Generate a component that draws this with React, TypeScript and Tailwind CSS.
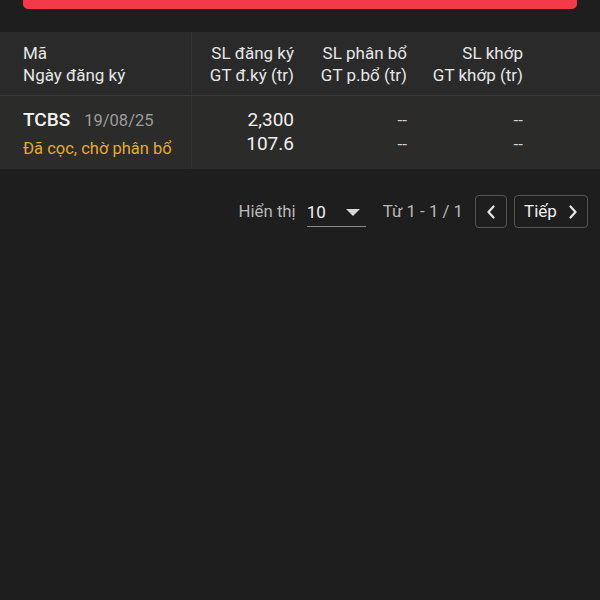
import React from "react";

export default function App() {
  return (
    <div
      className="w-[600px] h-[600px] bg-[#1e1e1e] text-[#e8e8e8] overflow-hidden"
      style={{ fontFamily: "Roboto, 'Noto Sans', sans-serif" }}
    >
      <div className="px-[23px]">
        <div className="h-[9px] bg-[#f23a48] rounded-b-[5px]" />
      </div>
      <div className="mt-[23px]">
        {/* header */}
        <div className="flex bg-[#2a2a2a] h-[64px] border-b border-[#3a3a3a] text-[17px] leading-[22px] text-[#e6e6e6]">
          <div className="w-[192px] pl-[23px] pt-[10px] border-r border-[#333333]">
            <div>Mã</div>
            <div>Ngày đăng ký</div>
          </div>
          <div className="w-[108px] pr-[6px] pt-[10px] text-right">
            <div>SL đăng ký</div>
            <div>GT đ.ký (tr)</div>
          </div>
          <div className="w-[113px] pr-[6px] pt-[10px] text-right">
            <div>SL phân bổ</div>
            <div>GT p.bổ (tr)</div>
          </div>
          <div className="w-[116px] pr-[6px] pt-[10px] text-right">
            <div>SL khớp</div>
            <div>GT khớp (tr)</div>
          </div>
        </div>
        {/* row */}
        <div className="flex bg-[#2b2b29] h-[73px]">
          <div className="w-[192px] pl-[23px] pt-[12px] border-r border-[#333331]">
            <div className="flex items-baseline leading-[24px]">
              <span className="text-[19px] font-medium text-[#f2f2f2]">TCBS</span>
              <span className="ml-[14px] text-[16.5px] text-[#9c9c9c]">19/08/25</span>
            </div>
            <div className="mt-[4px] text-[16.5px] leading-[24px] text-[#e5a92e]">
              Đã cọc, chờ phân bổ
            </div>
          </div>
          <div className="w-[108px] pr-[6px] pt-[12px] text-right text-[19px] leading-[24px] text-[#f0f0f0]">
            <div>2,300</div>
            <div>107.6</div>
          </div>
          <div className="w-[113px] pr-[6px] pt-[12px] text-right text-[17px] leading-[24px] text-[#d0d0d0]">
            <div>--</div>
            <div>--</div>
          </div>
          <div className="w-[116px] pr-[6px] pt-[12px] text-right text-[17px] leading-[24px] text-[#d0d0d0]">
            <div>--</div>
            <div>--</div>
          </div>
        </div>
      </div>
      {/* pagination */}
      <div className="flex items-center justify-end pr-[12px] mt-[26px] h-[33px]">
        <span className="text-[16.8px] text-[#b8b8b8]">Hiển thị</span>
        <div className="ml-[11px] w-[59px] h-[30px] flex items-center justify-between border-b border-[#8a8a8a] pt-[3px]">
          <span className="text-[17px] text-[#f0f0f0]">10</span>
          <svg width="14" height="8" viewBox="0 0 14 8" className="mr-[6px]">
            <path d="M0 0 L14 0 L7 7 Z" fill="#d8d8d8" />
          </svg>
        </div>
        <span className="ml-[17px] text-[16.8px] text-[#b8b8b8]">Từ 1 - 1 / 1</span>
        <div className="ml-[12px] w-[32px] h-[33px] border border-[#555555] rounded-[4px] flex items-center justify-center">
          <svg width="10" height="14" viewBox="0 0 10 14">
            <path d="M7.5 1.5 L2.5 7 L7.5 12.5" stroke="#e6e6e6" strokeWidth="2.2" fill="none" strokeLinecap="round" strokeLinejoin="round" />
          </svg>
        </div>
        <div className="ml-[7px] w-[74px] h-[33px] border border-[#555555] rounded-[4px] flex items-center justify-between pl-[9px] pr-[9px]">
          <span className="text-[17px] text-[#f0f0f0]">Tiếp</span>
          <svg width="10" height="14" viewBox="0 0 10 14">
            <path d="M2.5 1.5 L7.5 7 L2.5 12.5" stroke="#e6e6e6" strokeWidth="2.2" fill="none" strokeLinecap="round" strokeLinejoin="round" />
          </svg>
        </div>
      </div>
    </div>
  );
}
